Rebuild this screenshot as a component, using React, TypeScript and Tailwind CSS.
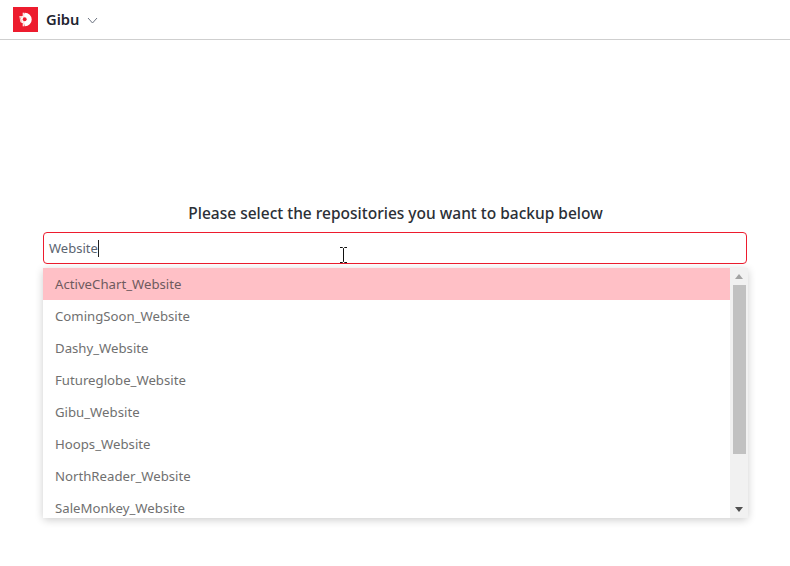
const repos = [
  'ActiveChart_Website',
  'ComingSoon_Website',
  'Dashy_Website',
  'Futureglobe_Website',
  'Gibu_Website',
  'Hoops_Website',
  'NorthReader_Website',
  'SaleMonkey_Website',
]

function Logo() {
  return (
    <div className="flex h-[25px] w-[25px] items-center justify-center bg-[#ed1c2e]">
      <svg width="17" height="17" viewBox="0 0 15 15">
        <path d="M7 1.5a6 6 0 1 1 0 12l-1-3h-2l-1-6h2z" fill="#fff" />
        <path d="M2 4.5h2.5v1.5H3l.5 1.5h1V10H3z" fill="#f8d5cf" />
        <path d="M5 1.5h1.5v12H5z" fill="#fbe3df" />
        <circle cx="6.8" cy="7.3" r="1.7" fill="#ed1c2e" />
      </svg>
    </div>
  )
}

export default function App() {
  return (
    <div className="relative h-[566px] w-[790px] overflow-hidden bg-white font-['Noto_Sans','Open_Sans',sans-serif]">
      <header className="flex h-10 items-center border-b border-[#cfcfcf] pl-[13px] pb-px">
        <Logo />
        <span className="ml-2 text-[14.7px] font-semibold text-[#1f2430]">Gibu</span>
        <svg className="ml-2 mt-0.5" width="11" height="7" viewBox="0 0 11 7" fill="none" stroke="#6b7280" strokeWidth="1">
          <path d="M1 1l4.5 5L10 1" />
        </svg>
      </header>

      <main className="flex flex-col pl-[43px] pr-[42px] pt-[163px]">
        <h1 className="text-center text-[15.5px] leading-5 font-medium text-[#2b2f36]">
          Please select the repositories you want to backup below
        </h1>
        <div className="mt-[9px] mr-px flex h-8 items-center rounded border border-[#ed1c2e] pl-[5px] pt-px text-[13px] text-[#5b6470]">
          Website
          <span className="h-[17px] w-px bg-[#222]" />
        </div>
        <div className="mt-1 flex h-[250px] rounded-b shadow-[0_2px_8px_rgba(0,0,0,0.2)]">
          <ul className="flex-1 overflow-hidden">
            {repos.map((name, i) => (
              <li
                key={name}
                className={
                  'flex h-8 shrink-0 items-center px-3 pt-px text-[13.2px] ' +
                  (i === 0 ? 'bg-[#ffc0c6] text-[#6e5a5e]' : 'bg-white text-[#707070]')
                }
              >
                {name}
              </li>
            ))}
          </ul>
          <div className="flex w-[18px] flex-col items-center bg-[#f1f1f1]">
            <svg className="mt-1.5" width="8" height="5" viewBox="0 0 8 5">
              <path d="M4 0l4 5H0z" fill="#a3a3a3" />
            </svg>
            <div className="mt-1.5 h-[169px] w-[13px] bg-[#c1c1c1]" />
            <svg className="mt-auto mb-1.5" width="8" height="5" viewBox="0 0 8 5">
              <path d="M0 0h8L4 5z" fill="#505050" />
            </svg>
          </div>
        </div>
      </main>

      <svg className="absolute left-[339px] top-[247px]" width="9" height="16" viewBox="0 0 9 16" fill="none" stroke="#111" strokeWidth="1">
        <path d="M1 .5h2.5l1 1 1-1H8M4.5 1.5v13M1 15.5h2.5l1-1 1 1H8" />
      </svg>
    </div>
  )
}
